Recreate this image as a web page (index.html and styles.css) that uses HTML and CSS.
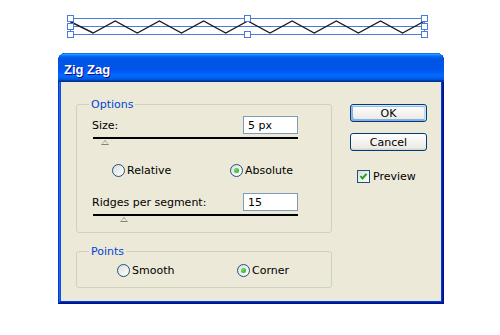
FILE: index.html
```html
<!DOCTYPE html>
<html lang="en">
<head>
    <meta charset="UTF-8">
    <title>Zig Zag</title>
    <link rel="stylesheet" href="styles.css">
</head>
<body>
    <svg class="artboard" width="500" height="53" viewBox="0 0 500 53">
        <rect class="bbox" x="70.5" y="18.5" width="354" height="16"/>
        <line class="bbox" x1="70.5" y1="26.5" x2="424.5" y2="26.5"/>
        <polyline class="zigzag" points="71,22 93.1,33 115.2,21 137.3,33 159.4,21 181.5,33 203.6,21 225.7,33 247.8,21 270,33 292.1,21 314.2,33 336.3,21 358.4,33 380.5,21 402.6,33 424.7,21"/>
        <rect class="handle" x="67.5" y="15.5" width="6" height="6"/>
        <rect class="handle" x="67.5" y="23.5" width="6" height="6"/>
        <rect class="handle" x="67.5" y="31.5" width="6" height="6"/>
        <rect class="handle" x="244.5" y="15.5" width="6" height="6"/>
        <rect class="handle" x="244.5" y="31.5" width="6" height="6"/>
        <rect class="handle" x="421.5" y="15.5" width="6" height="6"/>
        <rect class="handle" x="421.5" y="23.5" width="6" height="6"/>
        <rect class="handle" x="421.5" y="31.5" width="6" height="6"/>
    </svg>

    <div class="dialog">
        <div class="titlebar">Zig Zag</div>
        <div class="dialog-body">
            <div class="left-col">
                <fieldset class="group options">
                    <legend>Options</legend>
                    <div class="field-row first">
                        <label for="size">Size:</label>
                        <input type="text" id="size" value="5 px">
                    </div>
                    <div class="slider"><span class="thumb" style="margin-left: 8px"></span></div>
                    <div class="radio-row options-radios">
                        <span class="choice"><span class="radio"></span>Relative</span>
                        <span class="choice"><span class="radio checked"></span>Absolute</span>
                    </div>
                    <div class="field-row ridges">
                        <label for="ridges">Ridges per segment:</label>
                        <input type="text" id="ridges" value="15">
                    </div>
                    <div class="slider"><span class="thumb" style="margin-left: 27px"></span></div>
                </fieldset>

                <fieldset class="group points">
                    <legend>Points</legend>
                    <div class="radio-row points-radios">
                        <span class="choice"><span class="radio"></span>Smooth</span>
                        <span class="choice"><span class="radio checked"></span>Corner</span>
                    </div>
                </fieldset>
            </div>

            <div class="right-col">
                <button class="btn default">OK</button>
                <button class="btn">Cancel</button>
                <div class="check-row">
                    <span class="checkbox">
                        <svg width="11" height="11" viewBox="0 0 11 11"><path d="M2.5 5 L4.5 7.5 L8.5 2.8" fill="none" stroke="#21a121" stroke-width="2"/></svg>
                    </span>
                    Preview
                </div>
            </div>
        </div>
    </div>
</body>
</html>
```

FILE: styles.css
```css
body {
    margin: 0;
    background-color: #fff;
    font-family: "DejaVu Sans", sans-serif;
    font-size: 11px;
    color: #000;
}

.artboard {
    display: block;
}

.bbox {
    fill: none;
    stroke: #4a7bd9;
    stroke-width: 1;
}

.zigzag {
    fill: none;
    stroke: #1a1a1a;
    stroke-width: 1.4;
}

.handle {
    fill: #fff;
    stroke: #4a7bd9;
    stroke-width: 1;
}

/* window frame */
.dialog {
    width: 386px;
    margin-left: 58px;
    border-radius: 8px 8px 0 0;
    overflow: hidden;
    background-color: #0831d9;
    box-shadow: inset -1px -1px #00138c, inset 1px 1px #0831d9,
                inset -2px -2px #001ea0, inset 2px 2px #166aee,
                inset -3px -3px #003bda, inset 3px 3px #0855dd;
}

.titlebar {
    height: 25px;
    padding: 4px 0 0 6px;
    line-height: 25px;
    font-family: "Liberation Sans", sans-serif;
    font-weight: bold;
    font-size: 13px;
    color: #fff;
    text-shadow: 1px 1px #0f1089;
    background: linear-gradient(180deg, #0058ee 0%, #3593ff 4%, #288eff 6%, #127dff 8%, #036ffc 10%,
                #0262ee 14%, #0057e5 20%, #0054e3 24%, #0055eb 56%, #005bf5 66%, #026afe 76%,
                #0062ef 86%, #0052d6 92%, #0040ab 94%, #003092 100%);
}

.dialog-body {
    display: flex;
    height: 219px;
    margin: 0 3px 3px;
    padding: 16px 0 0 15px;
    box-sizing: border-box;
    background-color: #ece9d8;
}

.left-col {
    width: 256px;
    flex-shrink: 0;
}

.group {
    min-width: 0;
    margin: 0;
    padding: 0 33px 0 15px;
    border: 1px solid #d0d0bf;
    border-radius: 3px;
}

.group legend {
    margin-left: -3px;
    padding: 0 2px;
    line-height: 13px;
    color: #0046d5;
}

.options {
    padding-bottom: 9px;
}

.points {
    margin-top: 12px;
    padding-bottom: 10px;
}

.field-row {
    display: flex;
    justify-content: space-between;
    align-items: center;
}

.field-row.first {
    margin-top: 5px;
}

.field-row.ridges {
    margin-top: 16px;
}

.field-row input {
    width: 55px;
    height: 18px;
    padding: 0 0 0 4px;
    box-sizing: border-box;
    border: 1px solid #7f9db9;
    font-family: inherit;
    font-size: 11px;
    color: #000;
}

.slider {
    height: 7px;
    margin-top: 3px;
    margin-left: 1px;
    border-top: 2px solid #000;
}

.thumb {
    display: block;
    width: 0;
    height: 0;
    margin-top: 1px;
    border-left: 4px solid transparent;
    border-right: 4px solid transparent;
    border-bottom: 5px solid #808080;
    position: relative;
}

.thumb::after {
    content: "";
    position: absolute;
    left: -3px;
    top: 1px;
    border-left: 3px solid transparent;
    border-right: 3px solid transparent;
    border-bottom: 3px solid #ece9d8;
}

.radio-row {
    display: flex;
    align-items: center;
    height: 13px;
}

.options-radios {
    margin-top: 18px;
    padding-left: 20px;
}

.options-radios .choice:first-child {
    width: 118px;
}

.points-radios {
    margin-top: 6px;
    padding-left: 25px;
}

.points-radios .choice:first-child {
    width: 120px;
}

.choice {
    display: flex;
    align-items: center;
    gap: 2px;
    flex-shrink: 0;
}

.radio {
    width: 11px;
    height: 11px;
    border: 1px solid #1c5180;
    border-radius: 50%;
    background: linear-gradient(135deg, #dcdcd7, #fff);
    display: flex;
    align-items: center;
    justify-content: center;
}

.radio.checked::after {
    content: "";
    width: 5px;
    height: 5px;
    border-radius: 50%;
    background: radial-gradient(circle at 35% 35%, #6ee06a, #21a121);
}

.right-col {
    display: flex;
    flex-direction: column;
    margin-left: 18px;
    padding-top: 6px;
}

.btn {
    width: 77px;
    height: 18px;
    padding: 0;
    border: 1px solid #003c74;
    border-radius: 3px;
    background: linear-gradient(180deg, #fff, #ecebe6 86%, #d6d0c5);
    font-family: inherit;
    font-size: 11px;
    color: #000;
}

.btn + .btn {
    margin-top: 11px;
}

.btn.default {
    box-shadow: inset -1px 1px #cee7ff, inset 1px 2px #98b8ea,
                inset -2px 2px #bcd4f6, inset 1px -1px #89ade4,
                inset 2px -2px #89ade4;
}

.check-row {
    display: flex;
    align-items: center;
    gap: 3px;
    margin-top: 19px;
    margin-left: 7px;
}

.checkbox {
    width: 11px;
    height: 11px;
    border: 1px solid #1c5180;
    background: linear-gradient(135deg, #dcdcd7, #fff);
}

.checkbox svg {
    display: block;
}
```
